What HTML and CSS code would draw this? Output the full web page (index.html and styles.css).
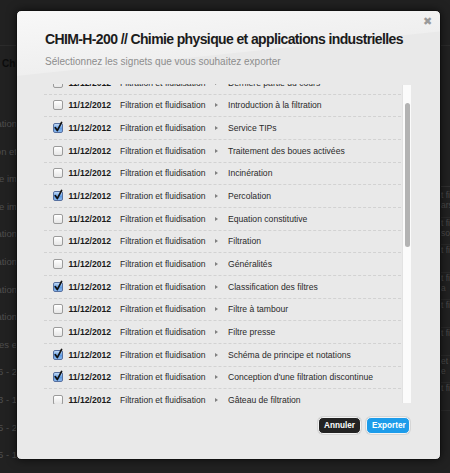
FILE: index.html
```html
<!DOCTYPE html>
<html lang="fr">
<head>
<meta charset="utf-8">
<title>Exporter les signets</title>
<link rel="stylesheet" href="styles.css">
</head>
<body>
<div class="page">
  <div class="page-top"></div>
  <div class="page-head"><span class="page-title">Chimie physique et applications industrielles</span></div>
  <div class="page-body">
    <div class="page-left">
      <div class="frag">Filtration</div>
      <div class="frag">Filtration et</div>
      <div class="frag">Chimie im</div>
      <div class="frag">Chimie im</div>
      <div class="frag">Percolation</div>
      <div class="frag">Incinération</div>
      <div class="frag">Filtration</div>
      <div class="frag">Filtration</div>
      <div class="frag">Boues es e</div>
      <div class="frag">2006 - 2</div>
      <div class="frag">2013 - 1</div>
      <div class="frag">2015 - 2</div>
      <div class="frag">2015 - 1</div>
    </div>
    <div class="page-right">
      <div class="rfrag">t fil<br>ars</div>
      <div class="rfrag">t fil<br>so</div>
      <div class="rfrag">t fil</div>
      <div class="rfrag">t fil<br>a</div>
      <div class="rfrag">t fil</div>
      <div class="rfrag">t fil</div>
      <div class="rfrag">et<br>e</div>
      <div class="rfrag">t fil</div>
    </div>
  </div>
</div>

<div class="modal">
  <span class="close">&#x2716;</span>
  <h1 class="title">CHIM-H-200 // Chimie physique et applications industrielles</h1>
  <p class="subtitle">Sélectionnez les signets que vous souhaitez exporter</p>

  <div class="list-wrap">
    <div class="list">
      <div class="rows">
        <div class="row"><span class="cb"></span><span class="date">11/12/2012</span><span class="cat">Filtration et fluidisation</span><span class="arr"><i></i></span><span class="name">Dernière partie du cours</span></div>
        <div class="row"><span class="cb"></span><span class="date">11/12/2012</span><span class="cat">Filtration et fluidisation</span><span class="arr"><i></i></span><span class="name">Introduction à la filtration</span></div>
        <div class="row"><span class="cb on"><svg viewBox="0 0 10 10" width="10" height="10"><path d="M2.2 4.6 L4.3 7.6 L8.6 -0.6" fill="none" stroke="#111" stroke-width="1.7" stroke-linecap="round" stroke-linejoin="round"/></svg></span><span class="date">11/12/2012</span><span class="cat">Filtration et fluidisation</span><span class="arr"><i></i></span><span class="name">Service TIPs</span></div>
        <div class="row"><span class="cb"></span><span class="date">11/12/2012</span><span class="cat">Filtration et fluidisation</span><span class="arr"><i></i></span><span class="name">Traitement des boues activées</span></div>
        <div class="row"><span class="cb"></span><span class="date">11/12/2012</span><span class="cat">Filtration et fluidisation</span><span class="arr"><i></i></span><span class="name">Incinération</span></div>
        <div class="row"><span class="cb on"><svg viewBox="0 0 10 10" width="10" height="10"><path d="M2.2 4.6 L4.3 7.6 L8.6 -0.6" fill="none" stroke="#111" stroke-width="1.7" stroke-linecap="round" stroke-linejoin="round"/></svg></span><span class="date">11/12/2012</span><span class="cat">Filtration et fluidisation</span><span class="arr"><i></i></span><span class="name">Percolation</span></div>
        <div class="row"><span class="cb"></span><span class="date">11/12/2012</span><span class="cat">Filtration et fluidisation</span><span class="arr"><i></i></span><span class="name">Equation constitutive</span></div>
        <div class="row"><span class="cb"></span><span class="date">11/12/2012</span><span class="cat">Filtration et fluidisation</span><span class="arr"><i></i></span><span class="name">Filtration</span></div>
        <div class="row"><span class="cb"></span><span class="date">11/12/2012</span><span class="cat">Filtration et fluidisation</span><span class="arr"><i></i></span><span class="name">Généralités</span></div>
        <div class="row"><span class="cb on"><svg viewBox="0 0 10 10" width="10" height="10"><path d="M2.2 4.6 L4.3 7.6 L8.6 -0.6" fill="none" stroke="#111" stroke-width="1.7" stroke-linecap="round" stroke-linejoin="round"/></svg></span><span class="date">11/12/2012</span><span class="cat">Filtration et fluidisation</span><span class="arr"><i></i></span><span class="name">Classification des filtres</span></div>
        <div class="row"><span class="cb"></span><span class="date">11/12/2012</span><span class="cat">Filtration et fluidisation</span><span class="arr"><i></i></span><span class="name">Filtre à tambour</span></div>
        <div class="row"><span class="cb"></span><span class="date">11/12/2012</span><span class="cat">Filtration et fluidisation</span><span class="arr"><i></i></span><span class="name">Filtre presse</span></div>
        <div class="row"><span class="cb on"><svg viewBox="0 0 10 10" width="10" height="10"><path d="M2.2 4.6 L4.3 7.6 L8.6 -0.6" fill="none" stroke="#111" stroke-width="1.7" stroke-linecap="round" stroke-linejoin="round"/></svg></span><span class="date">11/12/2012</span><span class="cat">Filtration et fluidisation</span><span class="arr"><i></i></span><span class="name">Schéma de principe et notations</span></div>
        <div class="row"><span class="cb on"><svg viewBox="0 0 10 10" width="10" height="10"><path d="M2.2 4.6 L4.3 7.6 L8.6 -0.6" fill="none" stroke="#111" stroke-width="1.7" stroke-linecap="round" stroke-linejoin="round"/></svg></span><span class="date">11/12/2012</span><span class="cat">Filtration et fluidisation</span><span class="arr"><i></i></span><span class="name">Conception d'une filtration discontinue</span></div>
        <div class="row"><span class="cb"></span><span class="date">11/12/2012</span><span class="cat">Filtration et fluidisation</span><span class="arr"><i></i></span><span class="name">Gâteau de filtration</span></div>
        <div class="row"><span class="cb"></span><span class="date">11/12/2012</span><span class="cat">Filtration et fluidisation</span><span class="arr"><i></i></span><span class="name">Filtres rotatifs</span></div>
      </div>
    </div>
    <div class="track"><div class="thumb"></div></div>
  </div>

  <div class="actions">
    <button class="btn btn-dark">Annuler</button>
    <button class="btn btn-blue">Exporter</button>
  </div>
</div>
</body>
</html>
```

FILE: styles.css
```css
html, body {
  margin: 0;
  padding: 0;
}
body {
  width: 450px;
  height: 473px;
  overflow: hidden;
  background: #212121;
  font-family: "Liberation Sans", Arial, Helvetica, sans-serif;
  position: relative;
}

/* ---------- background page (dimmed) ---------- */
.page {
  display: flex;
  flex-direction: column;
  height: 473px;
  overflow: hidden;
}
.page-top {
  height: 45px;
  flex: none;
  border-bottom: 1px solid #2b2b2b;
}
.page-head {
  height: 30px;
  width: 16px;
  flex: none;
  overflow: hidden;
  padding-left: 2px;
  padding-top: 5px;
  box-sizing: border-box;
  display: flex;
  align-items: center;
  white-space: nowrap;
}
.page-title {
  font-weight: bold;
  font-size: 10px;
  color: #0c0c0c;
}
.page-body {
  flex: none;
  display: flex;
  justify-content: space-between;
  align-items: flex-start;
  padding-top: 42px;
}
.page-left {
  width: 17px;
  display: flex;
  flex-direction: column;
}
.frag {
  flex: none;
  height: 27.6px;
  display: flex;
  justify-content: flex-end;
  overflow: hidden;
  white-space: nowrap;
  font-size: 9.5px;
  color: #4e4e4e;
  line-height: 12px;
}
.page-right {
  width: 9px;
  overflow: hidden;
  display: flex;
  flex-direction: column;
  margin-top: 68px;
  padding-top: 3px;
  border-top: 1px solid #303030;
}
.rfrag {
  flex: none;
  height: 27.6px;
  overflow: hidden;
  white-space: nowrap;
  font-size: 8.5px;
  line-height: 10px;
  color: #4a4a4a;
  border-bottom: 1px solid #2a2a2a;
  box-sizing: border-box;
}

/* ---------- modal ---------- */
.modal {
  position: absolute;
  left: 16px;
  top: 10px;
  width: 425px;
  height: 450px;
  box-sizing: border-box;
  border-radius: 5px;
  border: 1px solid #111;
  background: linear-gradient(174deg, #f8f8f8 0px, #efefef 64px, #e9e9e9 65px, #e9e9e9 100%);
  box-shadow: 0 0 10px rgba(0, 0, 0, 0.6);
  padding: 19px 29px 0 27px;
  display: flex;
  flex-direction: column;
}
.close {
  position: absolute;
  right: 8px;
  top: 3px;
  font-size: 11px;
  color: #9a9a9a;
  line-height: 14px;
}
.title {
  margin: 0 0 0 1px;
  font-size: 14px;
  line-height: 18px;
  letter-spacing: -0.62px;
  font-weight: bold;
  color: #1c1c1c;
  white-space: nowrap;
}
.subtitle {
  margin: 7px 0 0 1px;
  font-size: 10px;
  line-height: 13px;
  letter-spacing: 0;
  color: #8d8d8d;
  white-space: nowrap;
}

.list-wrap {
  margin-top: 16px;
  height: 320px;
  display: flex;
}
.list {
  flex: 1;
  overflow: hidden;
}
.rows {
  margin-top: -12px;
}
.row {
  height: 22.67px;
  box-sizing: border-box;
  border-bottom: 1px dashed #d2d2d2;
  display: flex;
  align-items: center;
  padding-left: 9px;
  font-size: 8.6px;
  color: #2a2a2a;
  white-space: nowrap;
}
.cb {
  width: 10px;
  height: 10px;
  box-sizing: border-box;
  border: 1px solid #9b9b9b;
  border-radius: 2px;
  background: linear-gradient(#ffffff, #e6e6e6);
  box-shadow: inset 0 1px 0 #fff;
  margin-right: 5.5px;
  flex: none;
  position: relative;
}
.cb.on {
  border-color: #5670a0;
  background: linear-gradient(#c3dbf7, #5f9be3 55%, #8ab8ee);
  box-shadow: none;
}
.cb svg {
  position: absolute;
  left: -1px;
  top: -1px;
  overflow: visible;
}
.date {
  font-weight: bold;
  width: 51.5px;
  color: #1a1a1a;
}
.cat {
  width: 93px;
}
.arr {
  width: 15px;
  padding-left: 2px;
  box-sizing: border-box;
  display: flex;
  align-items: center;
}
.arr i {
  display: block;
  width: 0;
  height: 0;
  border-left: 3px solid #808080;
  border-top: 2.5px solid transparent;
  border-bottom: 2.5px solid transparent;
}
.name {
  color: #2a2a2a;
}

.track {
  width: 9px;
  margin: 1px 0 1px 1px;
  background: #fbfbfb;
  border-left: 1px solid #e2e2e2;
  box-sizing: border-box;
  padding: 18px 1px 0 2px;
}
.thumb {
  height: 144px;
  border-radius: 3px;
  background: #b3b3b3;
}

.actions {
  margin-top: 13px;
  display: flex;
  justify-content: flex-end;
  gap: 5px;
  padding-right: 1px;
}
.btn {
  height: 17px;
  box-sizing: border-box;
  border-radius: 5px;
  border: 1px solid #f4f4f4;
  padding: 0 5px;
  font-family: "Liberation Sans", Arial, Helvetica, sans-serif;
  font-size: 8.2px;
  font-weight: bold;
  color: #fff;
  line-height: 15px;
  box-shadow: 0 0 0 1px #d6d6d6;
}
.btn-dark {
  background: #232323;
  width: 43px;
}
.btn-blue {
  background: #1d9cea;
  width: 44px;
}
```
